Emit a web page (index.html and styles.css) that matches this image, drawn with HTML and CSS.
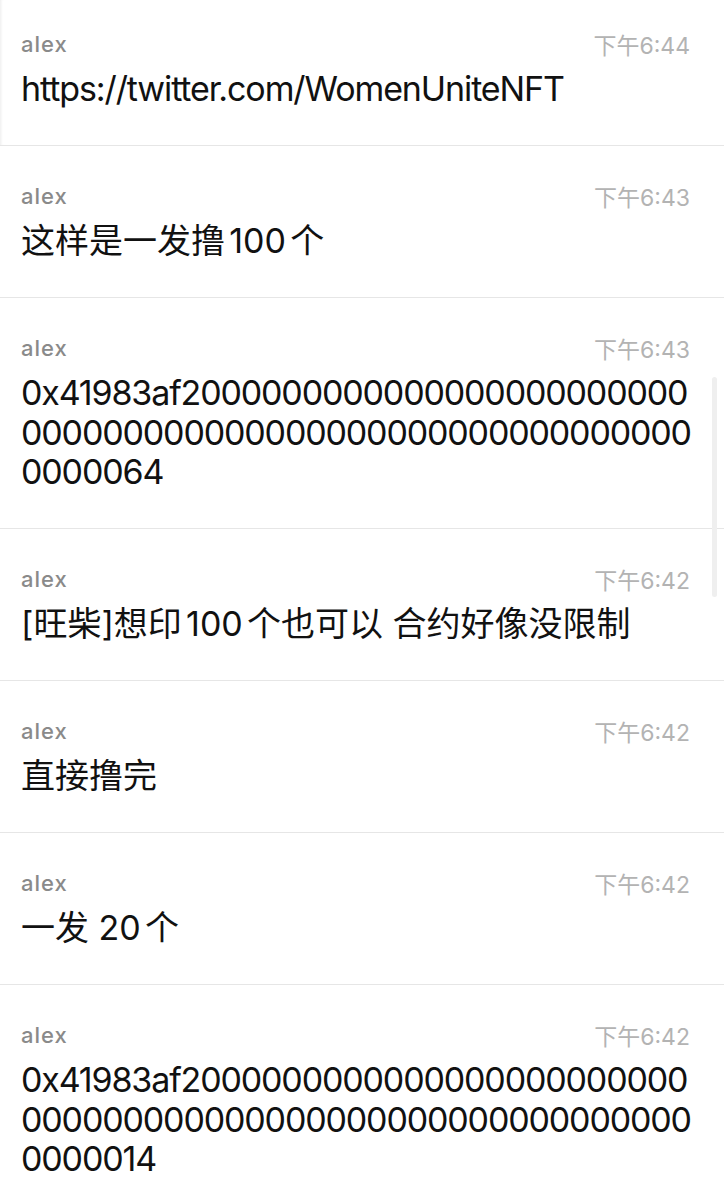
FILE: index.html
```html
<!DOCTYPE html>
<html lang="zh-CN">
<head>
<meta charset="utf-8">
<title>alex</title>
<link rel="stylesheet" href="styles.css">
</head>
<body>
<div class="list">
  <div class="item first">
    <div class="head"><span class="name">alex</span><span class="time">下午6:44</span></div>
    <div class="msg url">https://twitter.com/WomenUniteNFT</div>
  </div>
  <div class="item">
    <div class="head"><span class="name">alex</span><span class="time">下午6:43</span></div>
    <div class="msg">这样是一发撸100个</div>
  </div>
  <div class="item">
    <div class="head"><span class="name">alex</span><span class="time">下午6:43</span></div>
    <div class="msg hex">0x41983af2<!--
    -->0000000000<!--
    -->0000000000<!--
    -->0000000000<!--
    -->0000000000<!--
    -->0000000000<!--
    -->0000000000<!--
    -->00<!--
    -->64</div>
  </div>
  <div class="item">
    <div class="head"><span class="name">alex</span><span class="time">下午6:42</span></div>
    <div class="msg">[旺柴]想印100个也可以 合约好像没限制</div>
  </div>
  <div class="item">
    <div class="head"><span class="name">alex</span><span class="time">下午6:42</span></div>
    <div class="msg">直接撸完</div>
  </div>
  <div class="item">
    <div class="head"><span class="name">alex</span><span class="time">下午6:42</span></div>
    <div class="msg">一发 20个</div>
  </div>
  <div class="item">
    <div class="head"><span class="name">alex</span><span class="time">下午6:42</span></div>
    <div class="msg hex">0x41983af2<!--
    -->0000000000<!--
    -->0000000000<!--
    -->0000000000<!--
    -->0000000000<!--
    -->0000000000<!--
    -->0000000000<!--
    -->00<!--
    -->14</div>
  </div>
</div>
<div class="scrollbar"></div>
</body>
</html>
```

FILE: styles.css
```css
html, body {
  margin: 0;
  padding: 0;
  background: #ffffff;
}
body {
  width: 724px;
  height: 1200px;
  overflow: hidden;
  position: relative;
  font-family: Inter, "Noto Sans CJK SC", sans-serif;
}
.list {
  display: flex;
  flex-direction: column;
}
.item {
  padding: 35px 34px 36.5px 21px;
  border-bottom: 1px solid #e6e6e6;
}
.item.first {
  padding-top: 29px;
  box-shadow: inset 3px 0 3px -2px #ececec;
}
.head {
  display: flex;
  justify-content: space-between;
  align-items: center;
  height: 30px;
}
.name {
  font-size: 22px;
  font-weight: 500;
  letter-spacing: 1px;
  color: #8a8a8a;
}
.time {
  font-size: 23px;
  color: #b3b3b3;
}
.msg {
  margin-top: 10px;
  font-size: 34px;
  line-height: 39.5px;
  color: #111111;
  text-autospace: normal;
}
.url {
  letter-spacing: -1.1px;
}
.hex {
  word-break: break-all;
  letter-spacing: -1.15px;
  width: calc(33.5ch - 38.5px);
}
.scrollbar {
  position: absolute;
  left: 712px;
  top: 377px;
  width: 5px;
  height: 220px;
  border-radius: 3px;
  background: #efefef;
}
```
